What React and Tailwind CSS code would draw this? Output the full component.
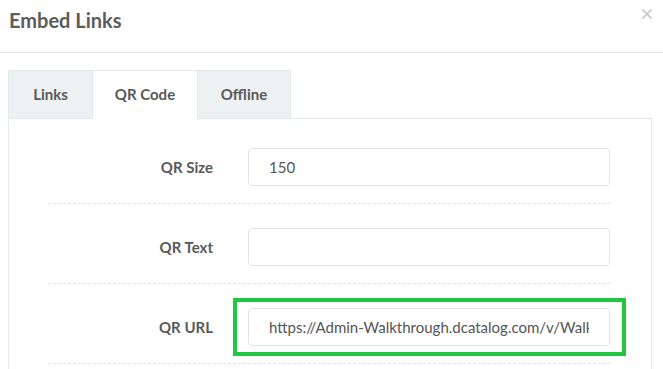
import { useState } from 'react';

const rows = [
  { label: 'QR Size', value: '150' },
  { label: 'QR Text', value: '' },
  { label: 'QR URL', value: 'https://Admin-Walkthrough.dcatalog.com/v/Walkthrough', highlight: true },
];

const tabs = [
  { name: 'Links', w: 'w-[85px]' },
  { name: 'QR Code', w: 'w-[106px]' },
  { name: 'Offline', w: 'w-[94px]' },
];

const FormRow = ({ label, value, highlight }) => {
  return (
    <div className="flex items-center pt-[24px] pb-[17px] border-b border-dashed border-[#e2e5e7]">
      <label className="w-[165px] text-right text-[15px] font-bold text-[#595959]">{label}</label>
      <div className="relative ml-[35px] w-[362px]">
        <input
          readOnly
          value={value}
          className="w-full h-[38px] px-[20px] border border-[#dfe4e7] rounded-[4px] text-[15px] text-[#555] bg-white outline-none"
        />
        {highlight && (
          <div className="absolute -left-[15px] -right-[16px] -top-[10px] -bottom-[10px] border-[4px] border-[#21c741] pointer-events-none"></div>
        )}
      </div>
    </div>
  );
};

export default function App() {
  const [active, setActive] = useState('QR Code');
  return (
    <div className="w-[663px] h-[369px] overflow-hidden bg-white" style={{ fontFamily: '"Source Sans Pro", Lato, "Noto Sans", sans-serif' }}>
      <div className="h-[53px] border-b border-[#e5e5e5] pl-[9px] pr-[11px] pt-[6px] flex items-start justify-between">
        <h1 className="text-[20px] leading-[28px] font-bold text-[#5c5c5c]">Embed Links</h1>
        <button className="mt-[3px] text-[#c8c8c8]">
          <svg width="10" height="10" viewBox="0 0 10 10" stroke="currentColor" strokeWidth="1.6">
            <line x1="0.5" y1="0.5" x2="9.5" y2="9.5" />
            <line x1="9.5" y1="0.5" x2="0.5" y2="9.5" />
          </svg>
        </button>
      </div>
      <div className="pt-[17px] pl-[8px] pr-[11px]">
        <div className="flex -mb-px relative">
          {tabs.map((t) => (
            <button
              key={t.name}
              onClick={() => setActive(t.name)}
              className={`${t.w} h-[49px] text-[15px] font-bold text-[#595959] border border-[#e3e8ea] -ml-px first:ml-0 ${
                active === t.name ? 'bg-white border-b-white' : 'bg-[#edf1f2]'
              }`}
            >
              {t.name}
            </button>
          ))}
        </div>
        <div className="border border-[#e3e8ea] pt-[5px] pl-[39px] pr-[40px] h-[400px]">
          {rows.map((r) => (
            <FormRow key={r.label} {...r} />
          ))}
        </div>
      </div>
    </div>
  );
}
